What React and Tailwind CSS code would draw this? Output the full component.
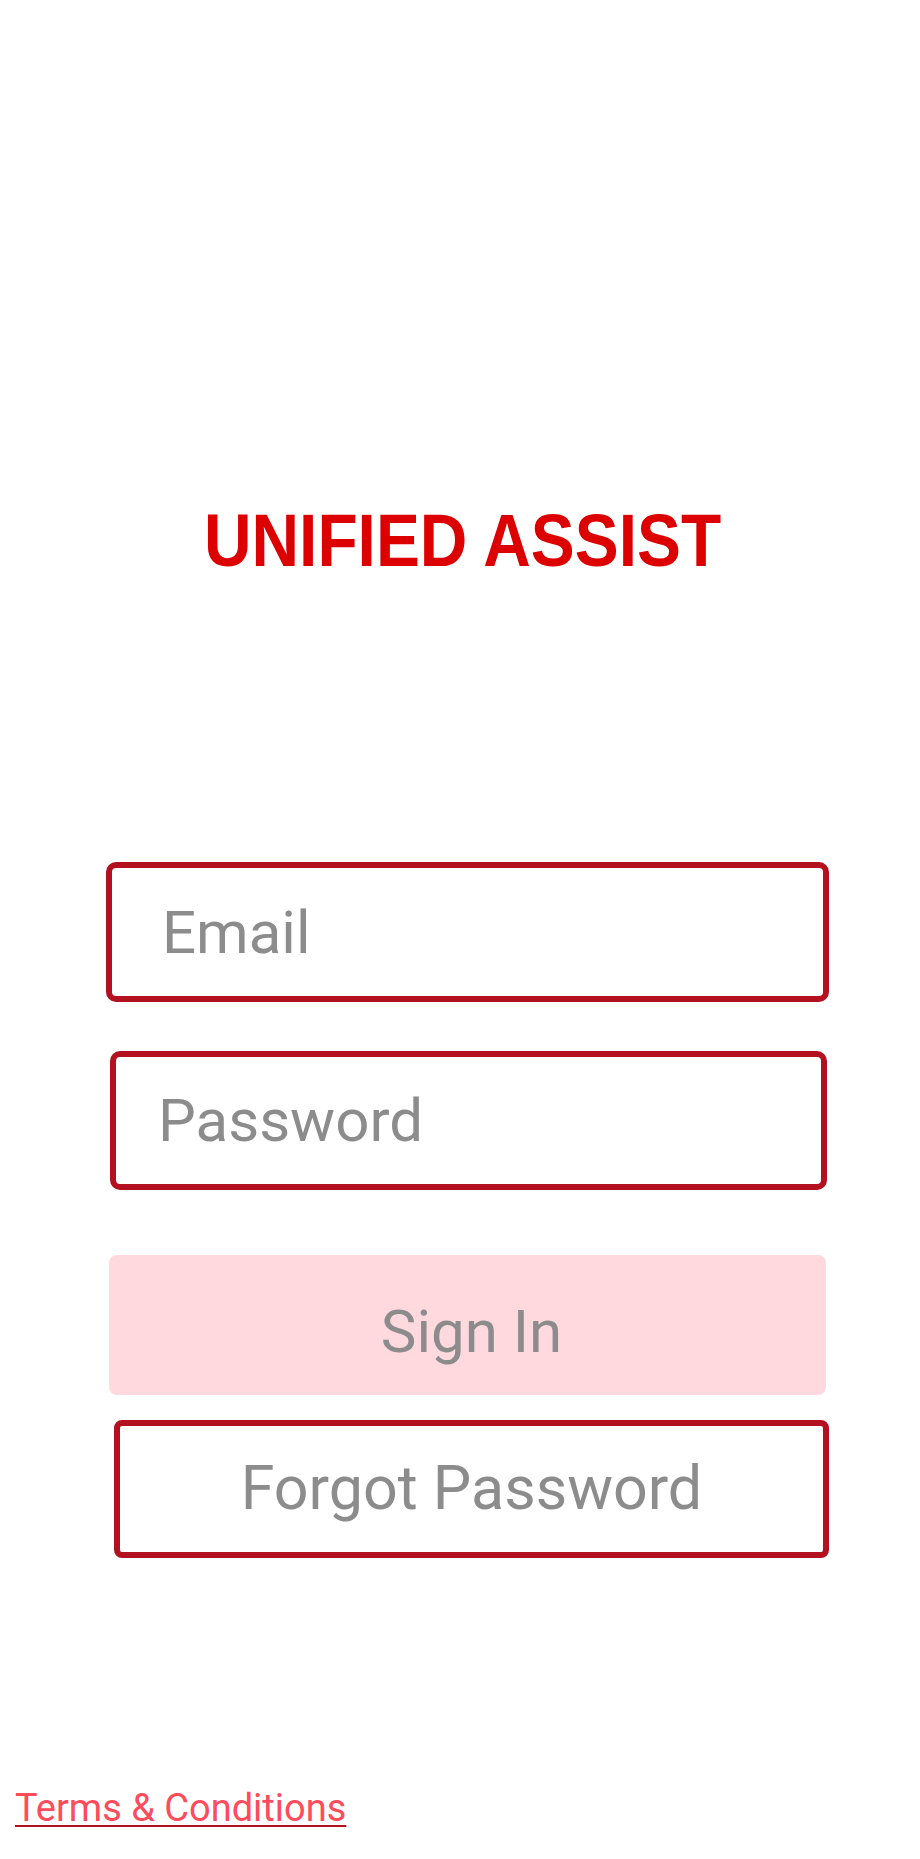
import React, { useState } from 'react';

const fieldFont = { fontFamily: 'Roboto, "Noto Sans", sans-serif' };

function LoginScreen() {
    const [email, setEmail] = useState('');
    const [password, setPassword] = useState('');

    return (
        <div className="min-h-[1859px] w-full bg-white flex flex-col" style={fieldFont}>
            <div className="mt-[504px] h-[74px] flex justify-center pl-[6px]">
                <h1
                    className="inline-block origin-center scale-x-[0.89] text-[74px] leading-[74px] font-bold text-[#dd0000] whitespace-nowrap"
                    style={{ fontFamily: '"Liberation Sans", Arial, sans-serif' }}
                >
                    UNIFIED ASSIST
                </h1>
            </div>

            <input
                type="email"
                value={email}
                onChange={(e) => setEmail(e.target.value)}
                placeholder="Email"
                className="mt-[284px] ml-[106px] w-[723px] h-[140px] border-[6px] border-[#b31020] rounded-[10px] pl-[50px] text-[60px] text-[#8c8c8c] placeholder:text-[#8c8c8c] outline-none bg-white"
            />

            <input
                type="password"
                value={password}
                onChange={(e) => setPassword(e.target.value)}
                placeholder="Password"
                className="mt-[49px] ml-[110px] w-[717px] h-[139px] border-[6px] border-[#b31020] rounded-[10px] pl-[42px] text-[60px] text-[#8c8c8c] placeholder:text-[#8c8c8c] outline-none bg-white"
            />

            <button
                type="button"
                className="mt-[65px] ml-[109px] w-[717px] h-[140px] rounded-[8px] bg-[#ffd9de] text-[60px] text-[#8c8c8c] flex items-center justify-center pl-[8px] pt-[14px]"
            >
                Sign In
            </button>

            <button
                type="button"
                className="mt-[25px] ml-[114px] w-[715px] h-[138px] rounded-[8px] border-[6px] border-[#b31020] bg-white text-[61px] text-[#8c8c8c] flex items-center justify-center"
            >
                Forgot Password
            </button>

            <a
                href="#"
                className="mt-[232px] ml-[15px] self-start text-[38px] leading-[37px] text-[#ff4b5c] underline decoration-[#b31020] decoration-2 underline-offset-[4px]"
            >
                Terms &amp; Conditions
            </a>
        </div>
    );
}

export default function App() {
    return <LoginScreen />;
}
